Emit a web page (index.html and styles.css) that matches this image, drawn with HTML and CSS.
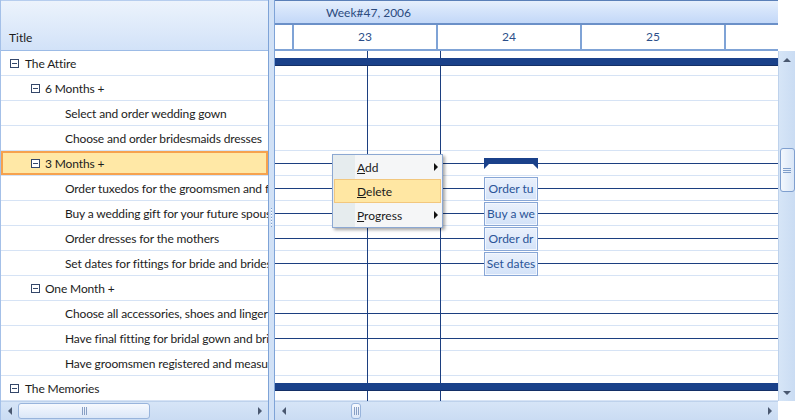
FILE: index.html
```html
<!DOCTYPE html>
<html>
<head>
<meta charset="utf-8">
<link rel="stylesheet" href="styles.css">
</head>
<body>
<div class="gantt">
  <div class="grid-pane">
    <div class="grid-head"><span>Title</span></div>
    <div class="grid-body">
      <div class="row l1"><span class="tog"></span>The Attire</div>
      <div class="row l2"><span class="tog"></span>6 Months +</div>
      <div class="row l3">Select and order wedding gown</div>
      <div class="row l3">Choose and order bridesmaids dresses</div>
      <div class="row l2 sel"><span class="tog"></span>3 Months +</div>
      <div class="row l3">Order tuxedos for the groomsmen and fathers</div>
      <div class="row l3">Buy a wedding gift for your future spouse</div>
      <div class="row l3">Order dresses for the mothers</div>
      <div class="row l3">Set dates for fittings for bride and bridesmaids</div>
      <div class="row l2"><span class="tog"></span>One Month +</div>
      <div class="row l3">Choose all accessories, shoes and lingerie</div>
      <div class="row l3">Have final fitting for bridal gown and bridesmaids dresses</div>
      <div class="row l3">Have groomsmen registered and measured</div>
      <div class="row l1"><span class="tog"></span>The Memories</div>
    </div>
    <div class="hscroll">
      <div class="sbtn"><span class="tri-l"></span></div>
      <div class="track"><div class="hthumb wide"><span class="vgrip"></span></div></div>
      <div class="sbtn"><span class="tri-r"></span></div>
    </div>
  </div>
  <div class="splitter"><span class="grip"></span></div>
  <div class="chart-pane">
    <div class="chart-head">
      <div class="timeline">
        <div class="week">Week#47, 2006</div>
        <div class="days">
          <div class="day stub"></div>
          <div class="day">23</div>
          <div class="day">24</div>
          <div class="day">25</div>
          <div class="day"></div>
        </div>
      </div>
      <div class="head-corner"></div>
    </div>
    <div class="chart-mid">
      <div class="chart-body">
        <div class="crow sum"></div>
        <div class="crow"></div>
        <div class="crow"></div>
        <div class="crow"></div>
        <div class="crow ln"></div>
        <div class="crow ln"></div>
        <div class="crow ln"></div>
        <div class="crow ln"></div>
        <div class="crow ln"></div>
        <div class="crow"></div>
        <div class="crow ln"></div>
        <div class="crow ln"></div>
        <div class="crow"></div>
        <div class="crow sum"></div>

        <span class="vline v1"></span>
        <span class="vline v2"></span>

        <svg class="bracket" width="54" height="11" viewBox="0 0 54 11"><polygon points="0,0 54,0 54,11 49,6 5,6 0,11" fill="#1a418a"/></svg>
        <div class="task t1">Order tu</div>
        <div class="task t2">Buy a we</div>
        <div class="task t3">Order dr</div>
        <div class="task t4">Set dates</div>

        <div class="menu">
          <div class="mi sub"><span><u>A</u>dd</span></div>
          <div class="mi hi"><span><u>D</u>elete</span></div>
          <div class="mi sub"><span><u>P</u>rogress</span></div>
        </div>
      </div>
      <div class="vscroll">
        <div class="vbtn"><span class="tri-u"></span></div>
        <div class="vthumb"><span class="hgrip"></span></div>
        <div class="vspace"></div>
        <div class="vbtn"><span class="tri-d"></span></div>
      </div>
    </div>
    <div class="chart-foot">
      <div class="hscroll grow">
        <div class="sbtn"><span class="tri-l"></span></div>
        <div class="track"><div class="hthumb narrow"><span class="vgrip"></span></div></div>
        <div class="sbtn"><span class="tri-r"></span></div>
      </div>
      <div class="foot-corner"></div>
    </div>
  </div>
</div>
</body>
</html>
```

FILE: styles.css
```css
* { box-sizing: border-box; margin: 0; padding: 0; }
html, body { background: #fff; }
body {
  width: 795px;
  height: 420px;
  overflow: hidden;
  font-family: Lato, "Open Sans", sans-serif;
  font-size: 12px;
  color: #1c1c1c;
}
.gantt { display: flex; height: 420px; }

/* ---------- left grid ---------- */
.grid-pane {
  width: 268px;
  flex: none;
  display: flex;
  flex-direction: column;
  border-left: 1px solid #a4c0e8;
  overflow: hidden;
}
.grid-head {
  height: 51px;
  flex: none;
  display: flex;
  align-items: flex-end;
  padding: 0 0 5px 8px;
  border-top: 1px solid #b6cdee;
  border-bottom: 1px solid #9cbbe6;
  background: linear-gradient(#ecf3fc, #d2e2f8);
  line-height: 15px;
}
.grid-body { flex: 1; overflow: hidden; }
.row {
  height: 25px;
  border-bottom: 1px solid #d6e3f5;
  display: flex;
  align-items: center;
  white-space: nowrap;
  overflow: hidden;
  line-height: 15px;
  letter-spacing: -0.13px;
}
.l1 { padding-left: 9px; }
.l2 { padding-left: 30px; }
.l3 { padding-left: 64px; }
.tog {
  width: 9px;
  height: 9px;
  flex: none;
  margin-right: 6px;
  border: 1px solid #34476a;
  background: #fff;
  position: relative;
}
.tog::after {
  content: "";
  position: absolute;
  left: 1px;
  right: 1px;
  top: 3px;
  height: 1px;
  background: #34476a;
}
.l2 .tog { margin-right: 5px; }
.sel {
  background: #ffe8a6;
  box-shadow: inset 0 0 0 2px #f6a24e;
}

/* ---------- scrollbars ---------- */
.hscroll {
  height: 19px;
  flex: none;
  display: flex;
  align-items: center;
  background: linear-gradient(#d6e5f7, #cadcf3);
  border-top: 1px solid #bed2ec;
}
.hscroll.grow { flex: 1; }
.sbtn {
  width: 17px;
  height: 18px;
  flex: none;
  display: flex;
  align-items: center;
  justify-content: center;
}
.track { flex: 1; height: 18px; display: flex; align-items: center; }
.hthumb {
  height: 16px;
  border: 1px solid #98b4dc;
  border-radius: 3px;
  background: linear-gradient(#f6f9fe, #dbe7f8);
  display: flex;
  align-items: center;
  justify-content: center;
}
.hthumb.wide { width: 132px; }
.hthumb.narrow { width: 10px; margin-left: 59px; }
.vgrip {
  width: 5px;
  height: 8px;
  background: repeating-linear-gradient(90deg, #889fc4 0 1px, transparent 1px 2px);
}
.tri-l, .tri-r, .tri-u, .tri-d { width: 0; height: 0; }
.tri-l {
  border-right: 4px solid #4a5870;
  border-top: 4px solid transparent;
  border-bottom: 4px solid transparent;
}
.tri-r {
  border-left: 4px solid #4a5870;
  border-top: 4px solid transparent;
  border-bottom: 4px solid transparent;
}
.tri-u {
  border-bottom: 4px solid #4a5870;
  border-left: 4px solid transparent;
  border-right: 4px solid transparent;
}
.tri-d {
  border-top: 4px solid #4a5870;
  border-left: 4px solid transparent;
  border-right: 4px solid transparent;
}

/* ---------- splitter ---------- */
.splitter {
  width: 7px;
  flex: none;
  background: #d1e1f6;
  border-left: 1px solid #7ea3d7;
  border-right: 1px solid #7ea3d7;
  display: flex;
  justify-content: center;
  align-items: flex-start;
}
.grip {
  width: 1px;
  height: 19px;
  margin-top: 208px;
  background: repeating-linear-gradient(#7e9fcd 0 1px, #fff 1px 2px, transparent 2px 3px);
}

/* ---------- chart ---------- */
.chart-pane {
  flex: 1;
  min-width: 0;
  display: flex;
  flex-direction: column;
}
.chart-head { height: 51px; flex: none; display: flex; }
.timeline { flex: 1; display: flex; flex-direction: column; overflow: hidden; }
.week {
  height: 25px;
  flex: none;
  border-top: 1px solid #5a7fb8;
  border-bottom: 2px solid #6b90c8;
  background: linear-gradient(#e6effc 0%, #d6e5fb 40%, #c3d8f8 100%);
  padding: 1px 0 0 51px;
  color: #2c4b7e;
  line-height: 21px;
}
.days {
  height: 26px;
  flex: none;
  display: flex;
  border-bottom: 2px solid #7fa3d6;
}
.day {
  width: 144px;
  flex: none;
  border-left: 2px solid #7fa3d6;
  text-align: center;
  color: #2d4f8a;
  line-height: 24px;
}
.day.stub { width: 17px; border-left: none; }
.head-corner { width: 17px; flex: none; background: #fff; }

.chart-mid { flex: 1; display: flex; min-height: 0; }
.chart-body { flex: 1; position: relative; overflow: hidden; }
.crow {
  height: 25px;
  border-bottom: 1px solid #d6e3f5;
  position: relative;
}
.ln::before, .sum::before {
  content: "";
  position: absolute;
  left: 0;
  right: 0;
  z-index: 2;
}
.ln::before { top: 12px; height: 1px; background: #1c3f80; }
.sum::before {
  top: 7px;
  height: 7px;
  background: #1a418a;
  border-bottom: 1px solid #142f66;
}
.vline {
  position: absolute;
  top: 0;
  bottom: 0;
  width: 1px;
  background: #1c3f80;
  z-index: 1;
}
.v1 { left: 92px; }
.v2 { left: 165px; }

.bracket { position: absolute; left: 209px; top: 107px; z-index: 3; }
.task {
  position: absolute;
  left: 209px;
  width: 54px;
  height: 24px;
  border: 1px solid #87a6d6;
  box-shadow: inset 0 0 0 1px #f3f7fe;
  background: linear-gradient(#eaf1fc, #d3e2f8);
  color: #2a5497;
  text-align: center;
  line-height: 22px;
  white-space: nowrap;
  overflow: hidden;
  z-index: 3;
}
.t1 { top: 126px; }
.t2 { top: 151px; }
.t3 { top: 176px; }
.t4 { top: 201px; }

.menu {
  position: absolute;
  left: 57px;
  top: 103px;
  width: 111px;
  border: 1px solid #8ca8d2;
  background: linear-gradient(90deg, #e6ecee 0 22px, #f5f6f7 22px);
  box-shadow: 2px 2px 3px rgba(0, 0, 0, 0.35);
  z-index: 5;
}
.mi {
  height: 24px;
  display: flex;
  align-items: center;
  padding-left: 24px;
  position: relative;
  line-height: 15px;
  color: #1a1a1a;
}
.mi.hi {
  margin: 0 1px;
  padding-left: 22px;
  background: #ffe7a3;
  border: 1px solid #f2c77e;
}
.sub::after {
  content: "";
  position: absolute;
  right: 4px;
  top: 8px;
  border-left: 4px solid #111;
  border-top: 4px solid transparent;
  border-bottom: 4px solid transparent;
}

.vscroll {
  width: 17px;
  flex: none;
  display: flex;
  flex-direction: column;
  align-items: center;
  background: linear-gradient(90deg, #d6e5f7, #cadcf3);
  border-left: 1px solid #bed2ec;
}
.vbtn {
  height: 17px;
  width: 16px;
  flex: none;
  display: flex;
  align-items: center;
  justify-content: center;
}
.vthumb {
  width: 15px;
  height: 44px;
  margin-top: 80px;
  flex: none;
  border: 1px solid #7f9fcf;
  border-radius: 3px;
  background: linear-gradient(90deg, #f3f7fd, #d9e6f7);
  display: flex;
  align-items: center;
  justify-content: center;
}
.hgrip {
  width: 8px;
  height: 5px;
  background: repeating-linear-gradient(#7f9dc9 0 1px, transparent 1px 2px);
}
.vspace { flex: 1; }

.chart-foot { height: 19px; flex: none; display: flex; }
.foot-corner { width: 17px; flex: none; background: #fff; }
```
